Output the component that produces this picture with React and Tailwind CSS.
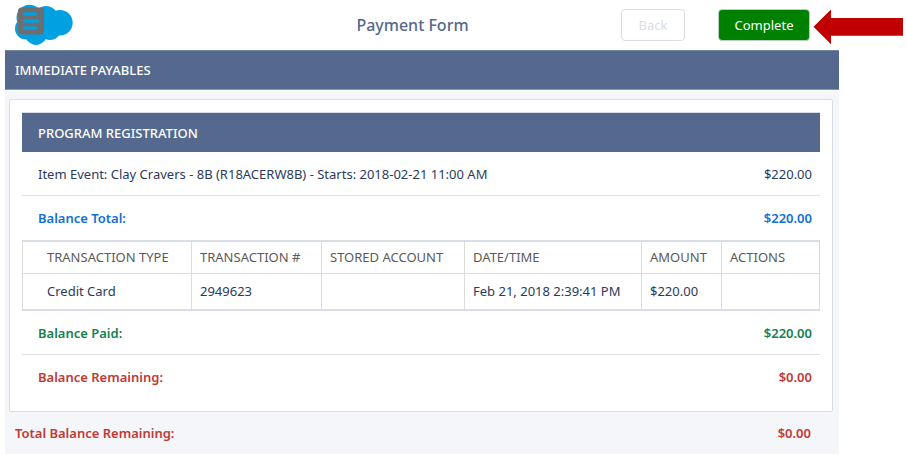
// Logo
function CloudLogo() {
  return (
    <svg width="58" height="42" viewBox="0 0 58 42" aria-hidden="true">
      <g fill="#00a1e0">
        <circle cx="14.5" cy="13.7" r="13" />
        <circle cx="11" cy="24.5" r="11" />
        <circle cx="31" cy="14" r="12" />
        <circle cx="21" cy="30.3" r="10.7" />
        <circle cx="35" cy="25" r="11" />
        <circle cx="45" cy="18.7" r="12.7" />
      </g>
      <rect x="3" y="3.4" width="26" height="27" rx="3.5" fill="#6d6e71" />
      <g stroke="#00a1e0" strokeWidth="3.6" strokeLinecap="round">
        <path d="M9.6 10H20.4" />
        <path d="M9.6 17H22.6" />
        <path d="M9.6 24H20.4" />
      </g>
    </svg>
  );
}

const transactions = [
  {
    type: 'Credit Card',
    number: '2949623',
    account: '',
    date: 'Feb 21, 2018 2:39:41 PM',
    amount: '$220.00',
  },
];

const headCell =
  'h-8 border border-[#dddbda] px-2 text-left font-normal text-[#5c5a58] whitespace-nowrap';
const bodyCell = 'h-[37px] border border-[#dddbda] px-2 whitespace-nowrap';

function Row({ label, amount, className }) {
  return (
    <div className={`flex h-11 items-center justify-between pl-4 pr-2 ${className}`}>
      <span>{label}</span>
      <span>{amount}</span>
    </div>
  );
}

export default function App() {
  return (
    <div className="relative bg-white pl-[5px] pr-[68px] font-['Noto_Sans','Open_Sans',sans-serif] text-[13px] leading-5 text-[#2b3a5c]">
      {/* Header */}
      <header className="grid h-[50px] grid-cols-3 items-center pl-[10px] pr-[29px]">
        <div>
          <CloudLogo />
        </div>
        <h1 className="text-center text-base font-medium text-[#54698d]">
          Payment Form
        </h1>
        <div className="flex justify-end gap-[33px]">
          <button
            type="button"
            disabled
            className="h-8 w-16 rounded border border-[#d8dde6] text-[#d8dde6]"
          >
            Back
          </button>
          <button
            type="button"
            className="h-8 w-[92px] rounded border border-[#b5d3bd] bg-[#008000] text-white"
          >
            Complete
          </button>
        </div>
      </header>

      {/* Pointer to the Complete button */}
      <svg
        className="absolute right-1 top-[9px]"
        width="90"
        height="36"
        viewBox="0 0 90 36"
        aria-hidden="true"
      >
        <path d="M0.5 17.8L18 0.5V9H90V26.7H18V35.2Z" fill="#c00000" />
      </svg>

      <main className="bg-[#f4f6f9]">
        <h2 className="flex h-10 items-center border-y border-t-[#7083a3] border-b-[#8796b0] bg-[#54698d] pl-[10px] font-medium text-white">
          IMMEDIATE PAYABLES
        </h2>

        <div className="border-t border-white pl-1 pr-[6px] pt-2">
          <section className="rounded-xs border border-[#d8dde6] bg-white p-3">
            <h3 className="flex h-10 items-center border-t border-[#d8dde6] bg-[#54698d] pl-4 font-medium text-white">
              PROGRAM REGISTRATION
            </h3>
            <Row
              label="Item Event: Clay Cravers - 8B (R18ACERW8B) - Starts: 2018-02-21 11:00 AM"
              amount="$220.00"
              className="border-b border-[#dde2ea]"
            />
            <Row
              label="Balance Total:"
              amount="$220.00"
              className="font-semibold text-[#1270d0]"
            />

            {/* Transactions */}
            <table className="w-full table-fixed border-collapse border-y-2 border-[#d8dde6]">
              <colgroup>
                <col className="w-[169px]" />
                <col className="w-[130px]" />
                <col className="w-[143px]" />
                <col className="w-[177px]" />
                <col className="w-[80px]" />
                <col />
              </colgroup>
              <thead>
                <tr>
                  <th className={`${headCell} pl-6`}>TRANSACTION TYPE</th>
                  <th className={headCell}>TRANSACTION #</th>
                  <th className={headCell}>STORED ACCOUNT</th>
                  <th className={headCell}>DATE/TIME</th>
                  <th className={headCell}>AMOUNT</th>
                  <th className={headCell}>ACTIONS</th>
                </tr>
              </thead>
              <tbody>
                {transactions.map((item) => (
                  <tr key={item.number}>
                    <td className={`${bodyCell} pl-6`}>{item.type}</td>
                    <td className={bodyCell}>{item.number}</td>
                    <td className={bodyCell}>{item.account}</td>
                    <td className={bodyCell}>{item.date}</td>
                    <td className={bodyCell}>{item.amount}</td>
                    <td className={bodyCell}></td>
                  </tr>
                ))}
              </tbody>
            </table>

            <Row
              label="Balance Paid:"
              amount="$220.00"
              className="border-b border-[#dde2ea] font-semibold text-[#15804f]"
            />
            <Row
              label="Balance Remaining:"
              amount="$0.00"
              className="font-semibold text-[#c23934]"
            />
          </section>
        </div>

        <div className="flex h-[42px] items-center justify-between pl-[10px] pr-7 font-semibold text-[#c23934]">
          <span>Total Balance Remaining:</span>
          <span>$0.00</span>
        </div>
      </main>
    </div>
  );
}
